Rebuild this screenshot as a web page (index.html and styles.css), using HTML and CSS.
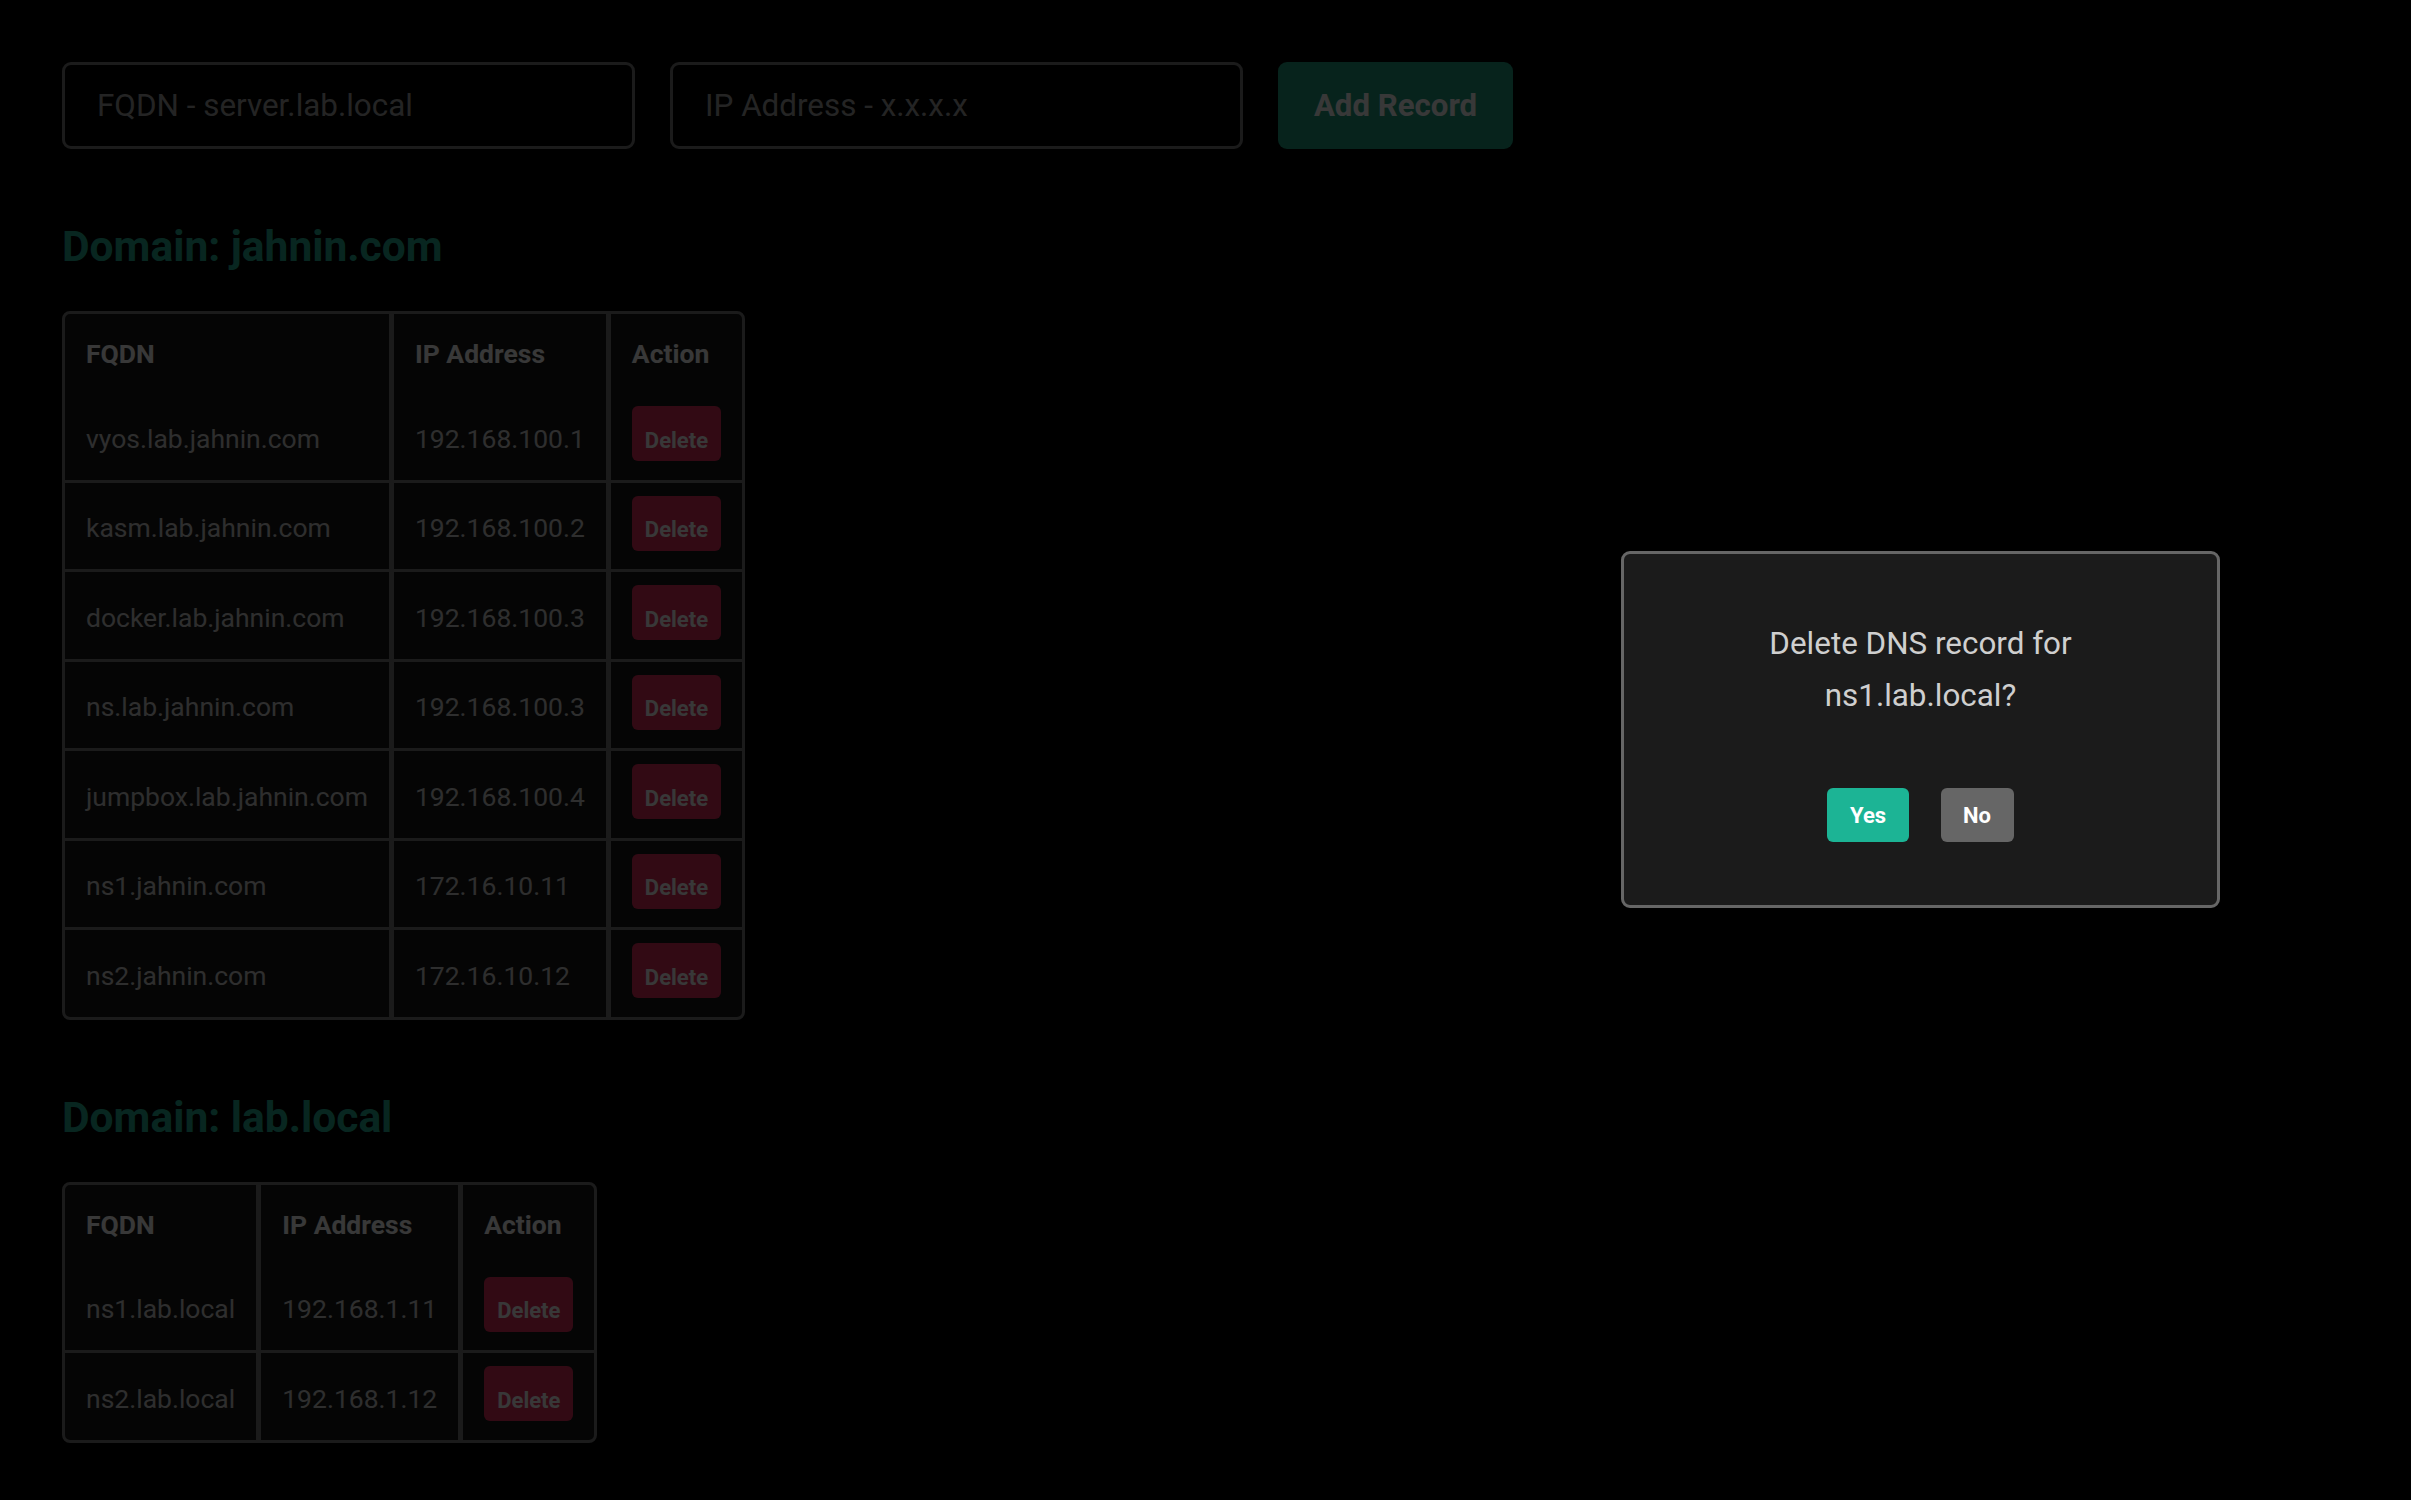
FILE: index.html
```html
<!DOCTYPE html>
<html lang="en">
<head>
<meta charset="utf-8">
<title>DNS Records</title>
<link rel="stylesheet" href="styles.css">
</head>
<body>
<div class="page">
  <form class="add-form">
    <input class="field" type="text" placeholder="FQDN - server.lab.local">
    <input class="field" type="text" placeholder="IP Address - x.x.x.x">
    <button class="btn-add" type="button">Add Record</button>
  </form>

  <section class="domain">
    <h2 class="domain-title">Domain: jahnin.com</h2>
    <table class="records">
      <thead>
        <tr><th>FQDN</th><th>IP Address</th><th>Action</th></tr>
      </thead>
      <tbody>
        <tr><td>vyos.lab.jahnin.com</td><td>192.168.100.1</td><td><button class="btn-del" type="button">Delete</button></td></tr>
        <tr><td>kasm.lab.jahnin.com</td><td>192.168.100.2</td><td><button class="btn-del" type="button">Delete</button></td></tr>
        <tr><td>docker.lab.jahnin.com</td><td>192.168.100.3</td><td><button class="btn-del" type="button">Delete</button></td></tr>
        <tr><td>ns.lab.jahnin.com</td><td>192.168.100.3</td><td><button class="btn-del" type="button">Delete</button></td></tr>
        <tr><td>jumpbox.lab.jahnin.com</td><td>192.168.100.4</td><td><button class="btn-del" type="button">Delete</button></td></tr>
        <tr><td>ns1.jahnin.com</td><td>172.16.10.11</td><td><button class="btn-del" type="button">Delete</button></td></tr>
        <tr><td>ns2.jahnin.com</td><td>172.16.10.12</td><td><button class="btn-del" type="button">Delete</button></td></tr>
      </tbody>
    </table>
  </section>

  <section class="domain">
    <h2 class="domain-title">Domain: lab.local</h2>
    <table class="records">
      <thead>
        <tr><th>FQDN</th><th>IP Address</th><th>Action</th></tr>
      </thead>
      <tbody>
        <tr><td>ns1.lab.local</td><td>192.168.1.11</td><td><button class="btn-del" type="button">Delete</button></td></tr>
        <tr><td>ns2.lab.local</td><td>192.168.1.12</td><td><button class="btn-del" type="button">Delete</button></td></tr>
      </tbody>
    </table>
  </section>
</div>

<div class="overlay">
  <div class="modal">
    <p class="modal-text">Delete DNS record for ns1.lab.local?</p>
    <div class="modal-actions">
      <button class="btn-yes" type="button">Yes</button>
      <button class="btn-no" type="button">No</button>
    </div>
  </div>
</div>
</body>
</html>
```

FILE: styles.css
```css
* {
  box-sizing: border-box;
}

body {
  margin: 0;
  background: #000;
  font-family: Roboto, "Liberation Sans", sans-serif;
}

.page {
  padding: 62px;
}

.add-form {
  display: flex;
  gap: 35px;
  margin: 0;
}

.field {
  width: 573px;
  height: 87px;
  border: 3px solid #7a7a7a;
  border-radius: 9px;
  background: transparent;
  padding: 0 32px;
  font-family: Roboto, "Liberation Sans", sans-serif;
  font-size: 31.4px;
  color: #fff;
  outline: none;
}

.field::placeholder {
  color: #a4a4a4;
}

.btn-add {
  width: 235px;
  height: 87px;
  border: 0;
  border-radius: 9px;
  background: #209f7f;
  color: #fff;
  font-family: Roboto, "Liberation Sans", sans-serif;
  font-size: 31.2px;
  font-weight: 700;
  padding: 0;
}

.domain-title {
  font-size: 42.5px;
  font-weight: 700;
  line-height: 1.2;
  margin: 72px 0 39px;
  color: #24ad91;
}

.records {
  border-collapse: separate;
  border-spacing: 0;
  border: 3px solid #7b7b7b;
  border-radius: 8px;
  background: #1a1a1a;
  font-size: 26.5px;
  color: #d1d1d1;
}

.records th {
  text-align: left;
  vertical-align: baseline;
  font-weight: 700;
  color: #fff;
  padding: 24px 21px 24px;
  white-space: nowrap;
}

.records td {
  vertical-align: baseline;
  padding: 13px 21px 18.5px;
  white-space: nowrap;
}

.records th:not(:last-child),
.records td:not(:last-child) {
  border-right: 5px solid #7b7b7b;
}

.records tbody tr + tr td {
  border-top: 3px solid #7b7b7b;
}

.btn-del {
  font-family: Roboto, "Liberation Sans", sans-serif;
  font-size: 22px;
  font-weight: 700;
  color: #fff;
  background: #e32d5b;
  border: 0;
  border-radius: 6px;
  padding: 21.5px 13px 8.5px;
}

.overlay {
  position: fixed;
  inset: 0;
  background: rgba(0, 0, 0, 0.78);
}

.modal {
  position: absolute;
  left: 1621px;
  top: 551px;
  width: 599px;
  padding: 64px 64px 63px;
  background: #1b1b1b;
  border: 3px solid #666;
  border-radius: 9px;
  text-align: center;
}

.modal-text {
  margin: 0 0 66px;
  font-size: 31.4px;
  line-height: 52px;
  color: #cfcfcf;
}

.modal-actions {
  display: flex;
  justify-content: center;
  gap: 32px;
}

.btn-yes,
.btn-no {
  font-family: Roboto, "Liberation Sans", sans-serif;
  font-size: 22px;
  font-weight: 700;
  color: #fff;
  border: 0;
  border-radius: 6px;
  padding: 14.6px 22.5px;
}

.btn-yes {
  background: #1cb495;
}

.btn-no {
  background: #666;
}
```
